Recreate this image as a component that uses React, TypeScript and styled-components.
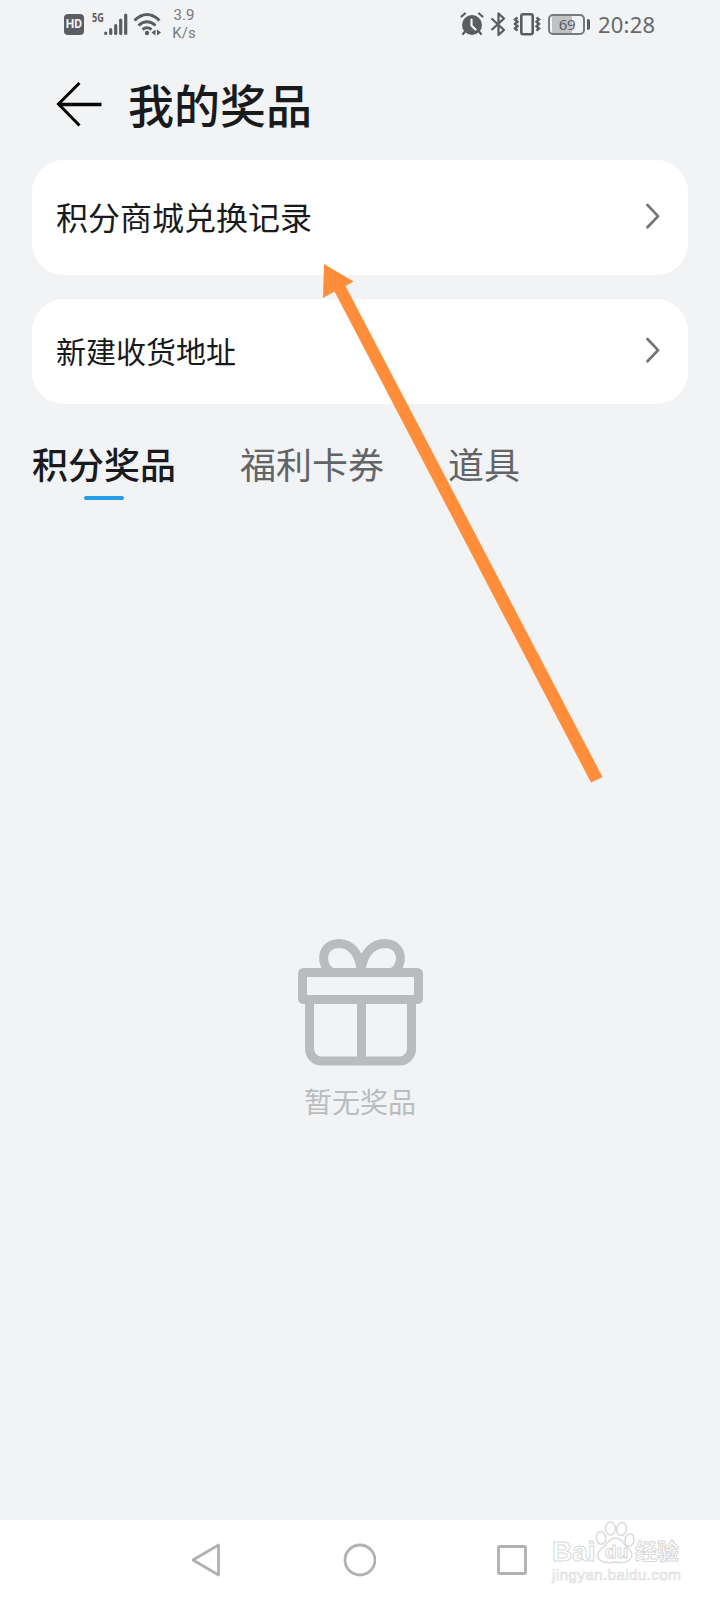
import React from "react";
import styled, { createGlobalStyle } from "styled-components";

const GlobalStyle = createGlobalStyle`
  *, *::before, *::after { box-sizing: border-box; }
  body { margin: 0; background: #f1f3f5; }
  svg { display: block; flex: none; }
`;

const ink = "#5b5d60";

const Screen = styled.div`
  position: relative;
  width: 720px;
  height: 1600px;
  overflow: hidden;
  display: flex;
  flex-direction: column;
  background: #f1f3f5;
  color: #191a1c;
  font-family: "AR PL UKai CN", "Kaiti SC", KaiTi, STKaiti, "Noto Sans CJK SC", sans-serif;
`;

const StatusBar = styled.header`
  height: 50px;
  padding: 0 65px 2px 64px;
  display: flex;
  justify-content: space-between;
  align-items: center;
  color: ${ink};
`;

const StatusGroup = styled.div`
  display: flex;
  align-items: center;
  height: 48px;
`;

const StatusIcon = styled.svg<{ $after?: number }>`
  margin-right: ${(p) => p.$after || 0}px;
`;

const HdBadge = styled.span`
  width: 20px;
  height: 21px;
  border-radius: 4px;
  background: ${ink};
  color: #f1f3f5;
  font: 700 12px/21px Roboto, sans-serif;
  text-align: center;
`;

const NetworkType = styled.span`
  width: 12px;
  margin: 0 0 13px 8px;
  font: 700 12px/12px "Open Sans", sans-serif;
  white-space: nowrap;

  span {
    display: block;
    transform: scaleX(0.76);
    transform-origin: left;
  }
`;

const NetSpeed = styled.span`
  width: 24px;
  margin-left: 10px;
  font: 400 15px/18px Roboto, sans-serif;
  text-align: center;
  color: #77797b;
`;

const Battery = styled.div`
  display: flex;
  align-items: center;
  width: 42px;
  height: 21px;
  margin-left: 7px;
`;

const BatteryBody = styled.span`
  width: 37px;
  height: 21px;
  padding-left: 1px;
  border: 2px solid #77797b;
  border-radius: 5px;
  background: linear-gradient(90deg, transparent 1px, #c0c2c4 1px, #c0c2c4 21px, transparent 21px) content-box;
  font: 400 15px/17px "Noto Sans", sans-serif;
  letter-spacing: -0.3px;
  text-align: center;
`;

const BatteryCap = styled.span`
  width: 3px;
  height: 11px;
  margin-left: 2px;
  border-radius: 1px 2px 2px 1px;
  background: ${ink};
`;

const Clock = styled.time`
  width: 57px;
  margin-left: 8px;
  font: 400 22px/30px "Noto Sans", sans-serif;
  letter-spacing: 0.2px;
  color: #66686a;
  white-space: nowrap;
`;

const TitleBar = styled.div`
  height: 110px;
  padding: 0 0 2px 56px;
  display: flex;
  align-items: center;
`;

const Title = styled.h1`
  margin: 0 0 3px 26px;
  font-size: 46px;
  line-height: 60px;
  font-weight: 500;
`;

const CardList = styled.div`
  padding: 0 32px;
  display: flex;
  flex-direction: column;
  gap: 24px;
`;

const Card = styled.div<{ $height: number; $size: number }>`
  height: ${(p) => p.$height}px;
  padding: 0 28px 3px 24px;
  border-radius: 32px;
  background: #fff;
  display: flex;
  align-items: center;
  justify-content: space-between;
  font-size: ${(p) => p.$size}px;
  line-height: 44px;
`;

const Tabs = styled.nav`
  height: 104px;
  padding: 33px 32px 0;
  display: flex;
  gap: 64px;
`;

const Tab = styled.div<{ $active?: boolean }>`
  height: 63px;
  display: flex;
  flex-direction: column;
  align-items: center;
  font-size: 36px;
  line-height: 52px;
  font-weight: ${(p) => (p.$active ? 500 : 400)};
  color: ${(p) => (p.$active ? "#191a1c" : "#626466")};

  &::after {
    content: "";
    width: 40px;
    height: 4px;
    margin-top: 7px;
    border-radius: 2px;
    background: ${(p) => (p.$active ? "#249ce8" : "transparent")};
  }
`;

const Empty = styled.main`
  flex: 1;
  padding-top: 431px;
  display: flex;
  flex-direction: column;
  align-items: center;
`;

const EmptyText = styled.p`
  margin: 14px 0 0;
  font-size: 28px;
  line-height: 40px;
  color: #babcbe;
`;

const NavBar = styled.footer`
  height: 80px;
  padding: 0 190px;
  background: #fff;
  display: flex;
  align-items: center;
  justify-content: space-between;
`;

const Pointer = styled.svg`
  position: absolute;
  left: 310px;
  top: 250px;
`;

const Watermark = styled.div`
  position: absolute;
  left: 552px;
  top: 1520px;
  width: 130px;
  color: #fff;
  -webkit-text-stroke: 1px #d9d9da;
`;

const Brand = styled.div`
  height: 46px;
  padding-top: 13px;
  display: flex;
  font: 700 28px/38px "Liberation Sans", "Noto Sans CJK SC", sans-serif;
`;

const BrandWord = styled.span<{ $width: number; $size?: number; $indent?: number }>`
  position: relative;
  z-index: 1;
  width: ${(p) => p.$width}px;
  padding-left: ${(p) => p.$indent || 0}px;
  font-size: ${(p) => p.$size || 28}px;
  white-space: nowrap;
`;

const Paw = styled.svg`
  position: absolute;
  left: 43px;
  top: 1px;
`;

const Site = styled.div`
  font: 400 15.5px/18px "Liberation Sans", sans-serif;
  letter-spacing: 0.25px;
  white-space: nowrap;
  -webkit-text-stroke: 0.7px #dcdcdd;
`;

const SignalIcon = () => (
  <StatusIcon $after={5} width="24" height="24" viewBox="0 0 24 24" stroke={ink} strokeWidth="3.2" strokeLinecap="round">
    <path d="M1.700 21.500v-.5M6.700 21.500v-4M11.700 21.500v-8M16.700 21.500V8M21.700 21.500V3" />
  </StatusIcon>
);

const WifiIcon = () => (
  <StatusIcon $after={1} width="28" height="24" viewBox="0 0 28 24" fill="none" stroke={ink} strokeWidth="3">
    <path d="M1.500 8.500q12.500-12 25 0M5.500 13.500q8.500-7.500 17 0M9.500 17.500q4.500-3.500 9 0" />
    <circle cx="14" cy="21" r="2.200" fill={ink} stroke="none" />
    <path d="m22.500 17.500-4 3 4 3zM24 17.500l4 3-4 3z" fill={ink} stroke="none" />
  </StatusIcon>
);

const AlarmIcon = () => (
  <StatusIcon $after={6} width="24" height="24" viewBox="0 0 24 24" fill="none" strokeLinecap="round">
    <circle cx="12" cy="13" r="10" fill={ink} />
    <path d="m1.500 4.500 3.500-3M19 1.500l3.500 3M5 19.500l-2 2.500M19 19.500l2 2.500" stroke={ink} strokeWidth="2.200" />
    <path d="M11.500 7.500v6l4 4" stroke="#f1f3f5" strokeWidth="2.200" />
  </StatusIcon>
);

const BluetoothIcon = () => (
  <StatusIcon $after={7} width="16" height="26" viewBox="0 0 16 26" fill="none" stroke={ink} strokeWidth="2.300">
    <path d="M1.500 7.500 14 19 8.500 24V2.500L14 7.500 1.500 19" strokeLinejoin="round" />
  </StatusIcon>
);

const VibrateIcon = () => (
  <StatusIcon width="28" height="24" viewBox="0 0 28 24" fill="none" stroke={ink} strokeWidth="2.600">
    <rect x="8.300" y="2.300" width="11.400" height="20" rx="2" />
    <path d="m4.500 5.500-2.500 2 2.500 2.200L2 12l2.500 2.200L2 16.500l2.500 2.200M23.500 5.500l2.500 2-2.500 2.200L26 12l-2.500 2.200 2.500 2.300-2.500 2.200" strokeWidth="2.400" />
  </StatusIcon>
);

const BackIcon = () => (
  <svg width="46" height="46" viewBox="0 0 46 46" fill="none" stroke="#050505" strokeWidth="3">
    <path d="M23.500 2 2.500 23l21 21.500" />
    <path d="M2.500 23.500h43" strokeWidth="3.600" />
  </svg>
);

const ChevronIcon = () => (
  <svg width="16" height="26" viewBox="0 0 16 26" fill="none" stroke="#747678" strokeWidth="2.700" strokeLinecap="round" strokeLinejoin="round">
    <path d="m3.500 2 10.500 11.200-10.500 11" />
  </svg>
);

const GiftIcon = () => (
  <svg width="126" height="128" viewBox="0 0 126 128" fill="none" stroke="#babbbd" strokeWidth="9">
    <rect x="5.500" y="33.500" width="116" height="27" rx="1" />
    <path d="M12.500 62v48a12 12 0 0 0 12 12h78a12 12 0 0 0 12-12V62M64.500 62v60" />
    <path d="M34 33C23 27 23 5 42 4.500 55 4.500 64 17 64 33 65 17 74 4.500 88 4.500c19 .5 19 22.500 8 28.500" />
  </svg>
);

const App: React.FC = () => (
  <>
    <GlobalStyle />
    <Screen>
      <StatusBar>
        <StatusGroup>
          <HdBadge>HD</HdBadge>
          <NetworkType><span>5G</span></NetworkType>
          <SignalIcon />
          <WifiIcon />
          <NetSpeed>3.9<br />K/s</NetSpeed>
        </StatusGroup>
        <StatusGroup>
          <AlarmIcon />
          <BluetoothIcon />
          <VibrateIcon />
          <Battery>
            <BatteryBody>69</BatteryBody>
            <BatteryCap />
          </Battery>
          <Clock>20:28</Clock>
        </StatusGroup>
      </StatusBar>

      <TitleBar>
        <BackIcon />
        <Title>我的奖品</Title>
      </TitleBar>

      <CardList>
        <Card $height={115} $size={32}>积分商城兑换记录<ChevronIcon /></Card>
        <Card $height={105} $size={30}>新建收货地址<ChevronIcon /></Card>
      </CardList>

      <Tabs>
        <Tab $active>积分奖品</Tab>
        <Tab>福利卡券</Tab>
        <Tab>道具</Tab>
      </Tabs>

      <Empty>
        <GiftIcon />
        <EmptyText>暂无奖品</EmptyText>
      </Empty>

      <NavBar>
        <svg width="32" height="34" viewBox="0 0 32 34" fill="none" stroke="#b1b1b1" strokeWidth="2.8" strokeLinejoin="round">
          <path d="M28.500 2v30L3 17z" />
        </svg>
        <svg width="34" height="34" viewBox="0 0 34 34" fill="none" stroke="#b1b1b1" strokeWidth="2.8">
          <circle cx="18" cy="17" r="15" />
        </svg>
        <svg width="34" height="34" viewBox="0 0 34 34" fill="none" stroke="#b1b1b1" strokeWidth="2.8">
          <rect x="2.500" y="3.500" width="27" height="27" rx="1.500" />
        </svg>
      </NavBar>

      <Pointer width="300" height="540" viewBox="0 0 300 540" fill="#ff8d3a">
        <path d="M14 14 43.500 31.500 35.500 36 292.500 527 281 532.500 24.500 41.500 13 48z" />
      </Pointer>

      <Watermark>
        <Paw width="42" height="44" viewBox="0 0 42 44" fill="#fff" stroke="#dadadb" strokeWidth="1.500">
          <ellipse cx="15.500" cy="7.500" rx="4.800" ry="6.500" />
          <ellipse cx="26.500" cy="8" rx="4.800" ry="6.500" transform="rotate(10 26.500 8)" />
          <ellipse cx="6" cy="17" rx="4.700" ry="6.300" transform="rotate(-8 6 17)" />
          <ellipse cx="34.500" cy="19" rx="4.500" ry="6.300" transform="rotate(10 34.500 19)" />
          <path d="M14 20q6-6 13 0 2 4 6 7c9 8 1 17-12 14-16 3-24-5-14-14 4-3 4-4 7-7z" />
        </Paw>
        <Brand>
          <BrandWord $width={53}>Bai</BrandWord>
          <BrandWord $width={28} $size={19}>du</BrandWord>
          <BrandWord $width={45} $size={22} $indent={2}>经验</BrandWord>
        </Brand>
        <Site>jingyan.baidu.com</Site>
      </Watermark>
    </Screen>
  </>
);

export default App;
